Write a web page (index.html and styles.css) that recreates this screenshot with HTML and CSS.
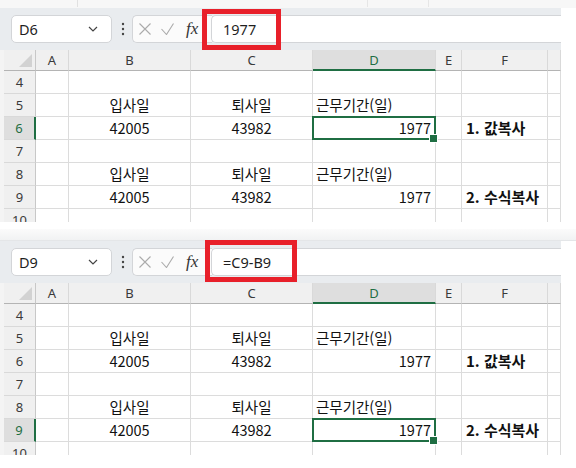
FILE: index.html
```html
<!DOCTYPE html>
<html lang="ko">
<head>
<meta charset="utf-8">
<link rel="stylesheet" href="styles.css">
</head>
<body>
<div class="page">
  <section class="panel panel-1">
    <div class="strip strip-1"></div>
    <div class="fbar">
      <div class="namebox"><span>D6</span>
        <svg class="chev" width="10" height="6" viewBox="0 0 10 6"><path d="M1 1l4 4 4-4" fill="none" stroke="#444" stroke-width="1.2"/></svg>
      </div>
      <svg class="dots" width="4" height="14" viewBox="0 0 4 14"><circle cx="2" cy="2" r="1.2" fill="#444"/><circle cx="2" cy="7" r="1.2" fill="#444"/><circle cx="2" cy="12" r="1.2" fill="#444"/></svg>
      <div class="fxgroup">
        <svg class="ic-x" width="12" height="12" viewBox="0 0 12 12"><path d="M0.5 0.5l11 11M11.5 0.5l-11 11" stroke="#ababab" stroke-width="1.1" fill="none"/></svg>
        <svg class="ic-ok" width="13" height="12" viewBox="0 0 13 12"><path d="M0.5 6l5 5.5 7-11" stroke="#ababab" stroke-width="1.1" fill="none"/></svg>
        <span class="fx">fx</span>
      </div>
      <div class="finput">1977</div>
      <div class="redbox redbox-1"></div>
    </div>
    <div class="sheet">
      <div class="hd corner"><span class="tri"></span></div><div class="hd">A</div><div class="hd">B</div><div class="hd">C</div><div class="hd hd-sel">D</div><div class="hd">E</div><div class="hd">F</div><div class="hd"></div>
      <div class="rh">4</div><div class="c"></div><div class="c"></div><div class="c"></div><div class="c"></div><div class="c"></div><div class="c"></div><div class="c"></div>
      <div class="rh">5</div><div class="c"></div><div class="c ctr">입사일</div><div class="c ctr">퇴사일</div><div class="c lft">근무기간(일)</div><div class="c"></div><div class="c"></div><div class="c"></div>
      <div class="rh rh-sel">6</div><div class="c"></div><div class="c ctr">42005</div><div class="c ctr">43982</div><div class="c rgt sel">1977</div><div class="c"></div><div class="c lft bold">1. 값복사</div><div class="c"></div>
      <div class="rh">7</div><div class="c"></div><div class="c"></div><div class="c"></div><div class="c"></div><div class="c"></div><div class="c"></div><div class="c"></div>
      <div class="rh">8</div><div class="c"></div><div class="c ctr">입사일</div><div class="c ctr">퇴사일</div><div class="c lft">근무기간(일)</div><div class="c"></div><div class="c"></div><div class="c"></div>
      <div class="rh">9</div><div class="c"></div><div class="c ctr">42005</div><div class="c ctr">43982</div><div class="c rgt">1977</div><div class="c"></div><div class="c lft bold">2. 수식복사</div><div class="c"></div>
      <div class="rh">10</div><div class="c"></div><div class="c"></div><div class="c"></div><div class="c"></div><div class="c"></div><div class="c"></div><div class="c"></div>
    </div>
  </section>

  <section class="panel panel-2">
    <div class="strip strip-2"></div>
    <div class="fbar">
      <div class="namebox"><span>D9</span>
        <svg class="chev" width="10" height="6" viewBox="0 0 10 6"><path d="M1 1l4 4 4-4" fill="none" stroke="#444" stroke-width="1.2"/></svg>
      </div>
      <svg class="dots" width="4" height="14" viewBox="0 0 4 14"><circle cx="2" cy="2" r="1.2" fill="#444"/><circle cx="2" cy="7" r="1.2" fill="#444"/><circle cx="2" cy="12" r="1.2" fill="#444"/></svg>
      <div class="fxgroup">
        <svg class="ic-x" width="12" height="12" viewBox="0 0 12 12"><path d="M0.5 0.5l11 11M11.5 0.5l-11 11" stroke="#ababab" stroke-width="1.1" fill="none"/></svg>
        <svg class="ic-ok" width="13" height="12" viewBox="0 0 13 12"><path d="M0.5 6l5 5.5 7-11" stroke="#ababab" stroke-width="1.1" fill="none"/></svg>
        <span class="fx">fx</span>
      </div>
      <div class="finput">=C9-B9</div>
      <div class="redbox redbox-2"></div>
    </div>
    <div class="sheet">
      <div class="hd corner"><span class="tri"></span></div><div class="hd">A</div><div class="hd">B</div><div class="hd">C</div><div class="hd hd-sel">D</div><div class="hd">E</div><div class="hd">F</div><div class="hd"></div>
      <div class="rh">4</div><div class="c"></div><div class="c"></div><div class="c"></div><div class="c"></div><div class="c"></div><div class="c"></div><div class="c"></div>
      <div class="rh">5</div><div class="c"></div><div class="c ctr">입사일</div><div class="c ctr">퇴사일</div><div class="c lft">근무기간(일)</div><div class="c"></div><div class="c"></div><div class="c"></div>
      <div class="rh">6</div><div class="c"></div><div class="c ctr">42005</div><div class="c ctr">43982</div><div class="c rgt">1977</div><div class="c"></div><div class="c lft bold">1. 값복사</div><div class="c"></div>
      <div class="rh">7</div><div class="c"></div><div class="c"></div><div class="c"></div><div class="c"></div><div class="c"></div><div class="c"></div><div class="c"></div>
      <div class="rh">8</div><div class="c"></div><div class="c ctr">입사일</div><div class="c ctr">퇴사일</div><div class="c lft">근무기간(일)</div><div class="c"></div><div class="c"></div><div class="c"></div>
      <div class="rh rh-sel">9</div><div class="c"></div><div class="c ctr">42005</div><div class="c ctr">43982</div><div class="c rgt sel">1977</div><div class="c"></div><div class="c lft bold">2. 수식복사</div><div class="c"></div>
      <div class="rh">10</div><div class="c"></div><div class="c"></div><div class="c"></div><div class="c"></div><div class="c"></div><div class="c"></div><div class="c"></div>
    </div>
  </section>
</div>
</body>
</html>
```

FILE: styles.css
```css
* { box-sizing: border-box; }
html, body { margin: 0; padding: 0; background: #ffffff; }
body {
  font-family: "Noto Sans", "Noto Sans CJK KR", sans-serif;
  color: #222;
  width: 576px;
  height: 468px;
  overflow: hidden;
}
.page { display: flex; flex-direction: column; }

.panel { display: flex; flex-direction: column; width: 576px; }
.panel-2 { margin-top: 7px; }

.strip { height: 8px; background: #f6f6f6; }
.strip-1 {
  background:
    linear-gradient(#e1e1e1, #e1e1e1) 77px 0 / 1px 7px no-repeat,
    linear-gradient(#e6e6e6, #e6e6e6) 367px 0 / 1px 7px no-repeat,
    linear-gradient(#e6e6e6, #e6e6e6) 428px 0 / 1px 7px no-repeat,
    #f7f7f7;
}
.strip-2 {
  height: 12px;
  background: linear-gradient(#fbfbfb, #f1f2f3);
  border-bottom: 1px solid #e4e6e8;
}

.fbar {
  position: relative;
  width: 561px;
  height: 42px;
  background: #e9ecef;
  display: flex;
  align-items: center;
  padding-left: 11px;
}
.namebox {
  width: 101px;
  height: 28px;
  background: #fff;
  border: 1px solid #d3d5d8;
  border-radius: 5px;
  display: flex;
  align-items: center;
  justify-content: space-between;
  padding: 0 13px 0 7px;
  font-size: 14.5px;
  color: #1f1f1f;
}
.chev { display: block; }
.dots { margin-left: 9px; display: block; }
.fxgroup {
  margin-left: 7px;
  width: 80px;
  height: 28px;
  background: #fbfbfb;
  border: 1px solid #d3d5d8;
  border-right: none;
  border-radius: 5px 0 0 5px;
  display: flex;
  align-items: center;
  padding-left: 6px;
}
.ic-x { display: block; }
.ic-ok { display: block; margin-left: 10px; }
.fx {
  margin-left: 12px;
  font-family: "Liberation Serif", "DejaVu Serif", serif;
  font-style: italic;
  font-size: 17px;
  color: #333;
  line-height: 1;
  margin-top: -2px;
}
.finput {
  flex: 1;
  height: 28px;
  margin-left: -1px;
  background: #fff;
  border: 1px solid #d3d5d8;
  border-right: none;
  border-radius: 5px 0 0 5px;
  padding-left: 11px;
  font-size: 14.5px;
  line-height: 26px;
  color: #1f1f1f;
}
.redbox {
  position: absolute;
  border: 5px solid #e8202a;
  pointer-events: none;
}
.redbox-1 { left: 202px; top: 1px; width: 79px; height: 41px; }
.redbox-2 { left: 205px; top: -1px; width: 92px; height: 42px; }

.sheet {
  width: 561px;
  height: 172px;
  overflow: hidden;
  padding-left: 4px;
  background: #f4f4f4;
  display: grid;
  grid-template-columns: 32px 33px 122px 122px 123px 26px 86px 13px;
  grid-template-rows: 21px repeat(7, 23px);
}
.hd {
  background: #f0f0f0;
  border-right: 1px solid #d9d9d9;
  border-bottom: 1px solid #b4b4b4;
  font-size: 13px;
  color: #3a3a3a;
  text-align: center;
  line-height: 20px;
}
.hd.corner { position: relative; border-right: 1px solid #c8c8c8; }
.tri {
  position: absolute;
  right: 3px;
  bottom: 3px;
  width: 0;
  height: 0;
  border-left: 13px solid transparent;
  border-bottom: 13px solid #d2d2d2;
}
.hd-sel {
  background: #dedede;
  border-bottom: 2px solid #1f6e43;
  color: #1f6e43;
}
.rh {
  background: #f0f0f0;
  border-right: 1px solid #c8c8c8;
  border-bottom: 1px solid #d9d9d9;
  font-size: 13px;
  color: #3a3a3a;
  text-align: center;
  line-height: 23px;
}
.rh-sel {
  background: #dedede;
  border-right: 2px solid #1f6e43;
  color: #1f6e43;
}
.c {
  background: #fff;
  border-right: 1px solid #dcdcdc;
  border-bottom: 1px solid #dcdcdc;
  font-family: "Noto Sans CJK KR", "Noto Sans", sans-serif;
  font-size: 14.5px;
  line-height: 22px;
  color: #111;
  white-space: nowrap;
  position: relative;
}
.ctr { text-align: center; }
.lft { padding-left: 3px; }
.rgt { text-align: right; padding-right: 4px; }
.bold { font-weight: 700; padding-left: 4px; font-size: 15px; }
.sel::after {
  content: "";
  position: absolute;
  left: -1px;
  top: -1px;
  right: -1px;
  bottom: -1px;
  border: 2px solid #1f6e43;
}
.sel::before {
  content: "";
  position: absolute;
  right: -3px;
  bottom: -4px;
  width: 7px;
  height: 7px;
  background: #1f6e43;
  border: 1px solid #fff;
  z-index: 2;
}
```
